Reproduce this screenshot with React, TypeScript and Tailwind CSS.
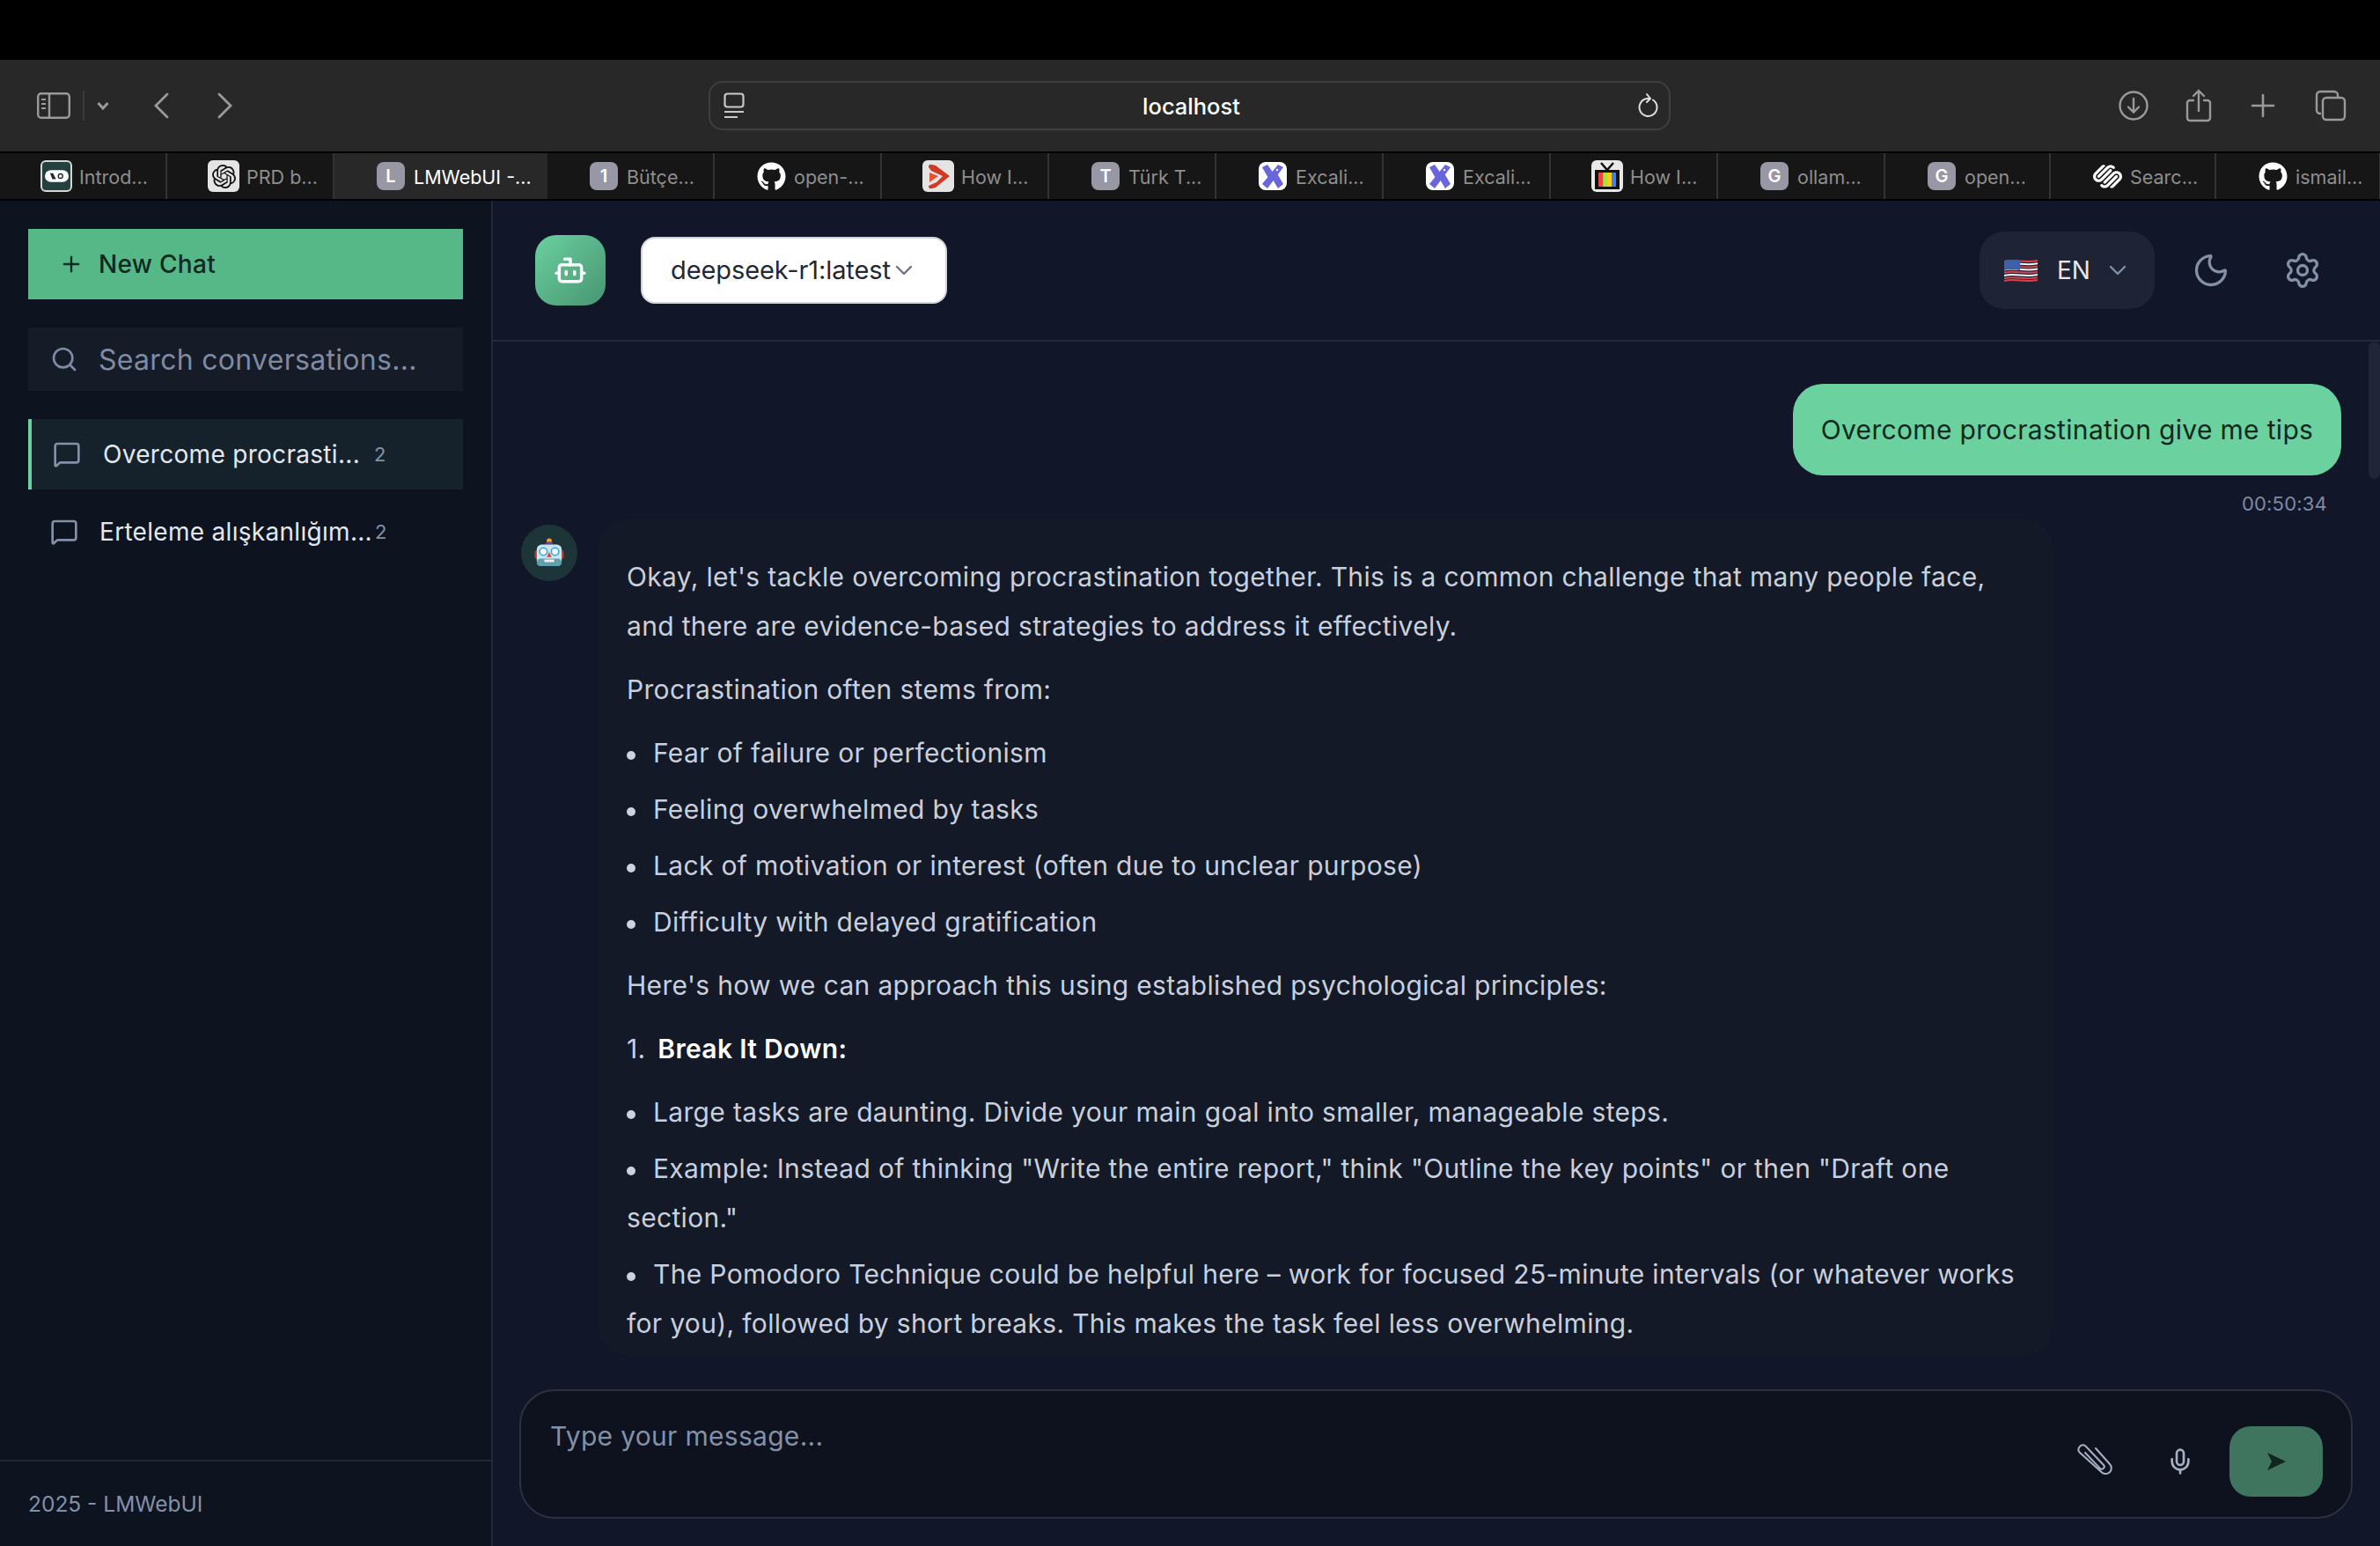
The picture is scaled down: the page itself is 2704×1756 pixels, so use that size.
import React from "react";
import { Plus, Search, MessageSquare, Bot, ChevronDown, Moon, Settings, Mic } from "lucide-react";
import { FaGithub } from "react-icons/fa";
import { SiOpenai, SiSquarespace } from "react-icons/si";

const Letter = ({ c }: { c: string }) => (
  <div className="w-[32px] h-[32px] rounded-[8px] bg-[#9797a5] flex items-center justify-center text-white text-[20px] font-semibold">{c}</div>
);
const IconBox = ({ children, bg }: { children: React.ReactNode; bg: string }) => (
  <div className={`w-[36px] h-[36px] rounded-[6px] flex items-center justify-center overflow-hidden ${bg}`}>{children}</div>
);
const Excal = () => (
  <div className="w-[32px] h-[32px] rounded-[8px] bg-white flex items-center justify-center">
    <svg viewBox="0 0 32 32" className="w-[32px] h-[32px]">
      <path d="M4 6 L10 3 L17 13 L12 20 Z" fill="#6965db" />
      <path d="M16 20 L21 13 L28 25 L22 30 Z" fill="#6965db" />
      <path d="M28 6 L22 3 L4 25 L10 30 Z" fill="#6965db" />
      <circle cx="21" cy="9" r="1.2" fill="#fff" />
    </svg>
  </div>
);
const Logo0 = () => (
  <div className="w-[36px] h-[36px] rounded-[6px] border-2 border-[#d5d5d5] bg-[#24403f] flex items-center justify-center">
    <svg viewBox="0 0 32 16" className="w-[27px] h-[14px]">
      <rect width="32" height="16" rx="8" fill="#fff" />
      <path d="M7 4 L11 4 L15 12 L10 12 Z" fill="#1d2b2b" />
      <circle cx="21" cy="8" r="3" fill="none" stroke="#1d2b2b" strokeWidth="1.6" />
    </svg>
  </div>
);
const Play = () => (
  <IconBox bg="bg-[#e4e4e4]">
    <svg viewBox="0 0 36 36" className="w-[36px] h-[36px]">
      <path d="M7 8 Q7 4 11 5 L15 6 L31 18 L15 31 L11 32 Q7 33 7 29 L16 25 L23 18 L10 12 Z" fill="#d33a26" />
      <path d="M8 14 L18 18 L8 25 Z" fill="#e8532f" />
    </svg>
  </IconBox>
);
const TV = () => (
  <IconBox bg="bg-[#e8e8e8]">
    <svg viewBox="0 0 36 36" className="w-[36px] h-[36px]">
      <path d="M11 3 L18 11 L25 3" fill="none" stroke="#111" strokeWidth="2.5" />
      <rect x="4" y="11" width="28" height="22" fill="#111" />
      <rect x="8" y="14" width="5" height="16" fill="#ef4444" />
      <rect x="13" y="14" width="5" height="16" fill="#a3e635" />
      <rect x="18" y="14" width="5" height="16" fill="#facc15" />
      <rect x="23" y="14" width="5" height="16" fill="#3b82f6" />
    </svg>
  </IconBox>
);

const tabs: { t: string; w: string; icon: React.ReactNode; active?: boolean }[] = [
  { t: "Introd...", w: "w-[190px]", icon: <Logo0 /> },
  { t: "PRD b...", w: "w-[190px]", icon: <IconBox bg="bg-[#e4e4e4]"><SiOpenai className="text-[#111] text-[27px]" /></IconBox> },
  { t: "LMWebUI -...", w: "w-[242px]", icon: <Letter c="L" />, active: true },
  { t: "Bütçe...", w: "w-[190px]", icon: <Letter c="1" /> },
  { t: "open-...", w: "w-[190px]", icon: <FaGithub className="text-white text-[33px]" /> },
  { t: "How I...", w: "w-[190px]", icon: <Play /> },
  { t: "Türk T...", w: "w-[190px]", icon: <Letter c="T" /> },
  { t: "Excali...", w: "w-[190px]", icon: <Excal /> },
  { t: "Excali...", w: "w-[190px]", icon: <Excal /> },
  { t: "How I...", w: "w-[190px]", icon: <TV /> },
  { t: "ollam...", w: "w-[190px]", icon: <Letter c="G" /> },
  { t: "open...", w: "w-[188px]", icon: <Letter c="G" /> },
  { t: "Searc...", w: "w-[188px]", icon: <SiSquarespace className="text-white text-[33px]" /> },
  { t: "ismail...", w: "w-[187px]", icon: <FaGithub className="text-white text-[33px]" /> },
];

const Tab = ({ t, w, icon, active }: { t: string; w: string; icon: React.ReactNode; active?: boolean }) => (
  <div className={`${w} shrink-0 h-full flex items-center pl-[46px] border-r-2 ${active ? "bg-[#282828] text-white border-transparent" : "text-[#8e8e8e] border-[#333333]"}`}>
    <div className="w-[36px] flex justify-center shrink-0">{icon}</div>
    <span className="ml-[8px] text-[21.5px] leading-[26px] pt-[1px] whitespace-nowrap">{t}</span>
  </div>
);

const Toolbar = () => (
  <div className="h-[104px] bg-[#282828] flex items-center text-[#9a9a9a]">
    <div className="w-[805px] shrink-0 flex items-center pl-[42px]">
      <svg viewBox="0 0 38 30" className="w-[38px] h-[30px]" fill="none" stroke="currentColor" strokeWidth="2.4">
        <rect x="1.2" y="1.2" width="35.6" height="27.6" rx="3.5" />
        <path d="M14 1.2 V28.8" />
        <path d="M5 8 H10 M5 13 H10 M5 18 H10" strokeWidth="2" />
      </svg>
      <div className="w-[2px] h-[34px] bg-[#3a3a3a] ml-[14px]" />
      <svg viewBox="0 0 14 10" className="w-[14px] h-[10px] ml-[14px]" fill="none" stroke="currentColor" strokeWidth="3">
        <path d="M1.5 2 L7 8 L12.5 2" />
      </svg>
      <svg viewBox="0 0 18 30" className="w-[18px] h-[30px] ml-[50px]" fill="none" stroke="currentColor" strokeWidth="2.8" strokeLinecap="round">
        <path d="M16 2 L3 15 L16 28" />
      </svg>
      <svg viewBox="0 0 18 30" className="w-[18px] h-[30px] ml-[55px]" fill="none" stroke="currentColor" strokeWidth="2.8" strokeLinecap="round">
        <path d="M2 2 L15 15 L2 28" />
      </svg>
    </div>
    <div className="w-[1093px] h-[56px] shrink-0 rounded-[16px] border-2 border-[#3f3f3f] flex items-center pl-[15px] pr-[11px]">
      <svg viewBox="0 0 24 30" className="w-[24px] h-[30px] shrink-0" fill="none" stroke="#c9c9c9" strokeWidth="2.2">
        <rect x="1.5" y="1.5" width="21" height="15" rx="3" />
        <path d="M1 22 H23 M1 28 H16" />
      </svg>
      <div className="flex-1 text-center text-white text-[25.5px] leading-none font-medium pt-[2px]">localhost</div>
      <svg viewBox="0 0 24 30" className="w-[24px] h-[30px] shrink-0" fill="none" stroke="#e0e0e0" strokeWidth="2" strokeLinecap="round">
        <path d="M17 8.5 A10 10 0 1 1 10 7 H13" />
        <path d="M10 2 L14 7 L10 11" />
      </svg>
    </div>
    <div className="flex-1 flex items-center pl-[509px]">
      <svg viewBox="0 0 34 34" className="w-[34px] h-[34px] shrink-0" fill="none" stroke="currentColor" strokeWidth="2.4" strokeLinecap="round">
        <circle cx="17" cy="17" r="15.5" />
        <path d="M17 9 V24 M11 18.5 L17 24.5 L23 18.5" />
      </svg>
      <svg viewBox="0 0 30 38" className="w-[30px] h-[38px] ml-[42px] shrink-0" fill="none" stroke="currentColor" strokeWidth="2.4" strokeLinecap="round">
        <path d="M9 13 H5 a3 3 0 0 0 -3 3 V33 a3 3 0 0 0 3 3 H25 a3 3 0 0 0 3 -3 V16 a3 3 0 0 0 -3 -3 H21" />
        <path d="M15 25 V2 M9 8 L15 2 L21 8" />
      </svg>
      <svg viewBox="0 0 28 28" className="w-[28px] h-[28px] ml-[44px] shrink-0" fill="none" stroke="currentColor" strokeWidth="2.6" strokeLinecap="round">
        <path d="M14 2 V26 M2 14 H26" />
      </svg>
      <svg viewBox="0 0 36 36" className="w-[36px] h-[36px] ml-[45px] shrink-0" fill="none" stroke="currentColor" strokeWidth="2.4">
        <path d="M7 27 H6 a4 4 0 0 1 -4 -4 V6 a4 4 0 0 1 4 -4 H22 a4 4 0 0 1 4 4 V8" />
        <rect x="9" y="9" width="25" height="25" rx="4" />
      </svg>
    </div>
  </div>
);

const ChatItem = ({ t, active }: { t: string; active?: boolean }) => (
  <div className={`h-[80px] flex items-center text-[28px] tracking-[0.3px] ${active ? "bg-[#16222b] border-l-4 border-[#6bd09f] pl-[24px]" : "pl-[25px]"} text-[#e2e8f0]`}>
    <MessageSquare className="w-[32px] h-[32px] text-[#8390a8] shrink-0" strokeWidth={2} />
    <span className={`whitespace-nowrap ${active ? "ml-[25px] w-[308px]" : "ml-[24px] w-[313px]"}`}>{t}</span>
    <span className="text-[22px] text-[#8390a8] tracking-normal">2</span>
  </div>
);

const Sidebar = () => (
  <aside className="w-[560px] shrink-0 bg-[#0d131f] border-r-2 border-[#232837] flex flex-col">
    <div className="flex-1 px-[32px] pt-[32px]">
      <div className="h-[80px] bg-[#56b886] flex items-center pl-[35px] text-[#0f2a20] text-[28px] font-medium tracking-[0.3px]">
        <Plus className="w-[28px] h-[28px] shrink-0" strokeWidth={2} />
        <span className="ml-[17px]">New Chat</span>
      </div>
      <div className="h-[72px] mt-[32px] bg-[#151b27] flex items-center pl-[25px] text-[#7f8aa3] text-[32px] tracking-[0.3px]">
        <Search className="w-[32px] h-[32px] shrink-0" strokeWidth={2} />
        <span className="ml-[23px] pt-[2px]">Search conversations...</span>
      </div>
      <div className="mt-[32px] flex flex-col gap-[8px]">
        <ChatItem t="Overcome procrasti..." active />
        <ChatItem t="Erteleme alışkanlığım..." />
      </div>
    </div>
    <div className="h-[98px] border-t-2 border-[#232837] pl-[32px] pt-[32px] text-[24.5px] leading-[32px] text-[#8390a8]">2025 - LMWebUI</div>
  </aside>
);

const Flag = () => (
  <svg viewBox="0 0 38 28" className="w-[38px] h-[28px] shrink-0">
    {[0, 1, 2, 3, 4, 5, 6].map((i) => (
      <path key={i} d={`M0 ${3 + i * 3.2} C12 ${0 + i * 3.2} 24 ${5 + i * 3.2} 38 ${2 + i * 3.2} V${4 + i * 3.2} C24 ${7 + i * 3.2} 12 ${2 + i * 3.2} 0 ${5 + i * 3.2} Z`} fill={i % 2 === 0 ? "#d9414b" : "#f4f4f4"} />
    ))}
    <path d="M0 25 C12 22 24 27 38 24 V26 C24 29 12 24 0 27 Z" fill="#d9414b" />
    <path d="M0 3 C6 1.5 12 1.5 18 3 V14 C12 12.5 6 12.5 0 14 Z" fill="#3f5fa8" />
  </svg>
);

const Header = () => (
  <header className="h-[160px] shrink-0 border-b-2 border-[#242a3b] flex items-center pl-[48px]">
    <div className="w-[80px] h-[80px] rounded-[24px] bg-gradient-to-br from-[#6bd09f] to-[#489672] flex items-center justify-center">
      <Bot className="w-[38px] h-[38px] text-white" strokeWidth={2.2} />
    </div>
    <div className="ml-[40px] w-[348px] h-[76px] rounded-[16px] bg-white border-2 border-[#d1d5db] flex items-center pl-[32px] text-[#1f2937] text-[29px] tracking-[-0.1px]">
      <span>deepseek-r1:latest</span>
      <ChevronDown className="w-[32px] h-[32px] -ml-[1px] text-[#6b7280]" strokeWidth={1.8} />
    </div>
    <div className="flex-1" />
    <div className="w-[199px] h-[88px] rounded-[28px] bg-[#1e2436] flex items-center pl-[28px] text-[#e5e7eb] text-[28px]">
      <Flag />
      <span className="ml-[22px]">EN</span>
      <ChevronDown className="w-[32px] h-[32px] ml-[15px] text-[#8390a8]" strokeWidth={1.8} />
    </div>
    <Moon className="w-[44px] h-[44px] ml-[42px] text-[#8390a8]" strokeWidth={1.8} />
    <Settings className="w-[44px] h-[44px] ml-[60px] mr-[66px] text-[#8390a8]" strokeWidth={1.8} />
  </header>
);

const RobotEmoji = () => (
  <svg viewBox="0 0 36 36" className="w-[34px] h-[34px]">
    <circle cx="18" cy="3.5" r="3" fill="#f5a524" />
    <path d="M13.5 8 a4.5 3.5 0 0 1 9 0 Z" fill="#6a3fa0" />
    <rect x="0.5" y="15" width="4" height="10" rx="2" fill="#b03a2e" />
    <rect x="31.5" y="15" width="4" height="10" rx="2" fill="#b03a2e" />
    <rect x="3" y="8" width="30" height="26" rx="6" fill="#c9e6ec" />
    <rect x="3" y="25" width="30" height="9" rx="4.5" fill="#5f9fae" />
    <circle cx="11" cy="16.5" r="4.5" fill="#f2fbfd" stroke="#3fa0d8" strokeWidth="1.6" />
    <circle cx="25" cy="16.5" r="4.5" fill="#f2fbfd" stroke="#3fa0d8" strokeWidth="1.6" />
    <path d="M18 17 L21 23 H15 Z" fill="#d9453a" />
    <rect x="12" y="26" width="12" height="3" rx="1" fill="#eeeeee" />
  </svg>
);

const Li = ({ children }: { children: React.ReactNode }) => (
  <p className="mb-[8px]">
    <span className="inline-block w-[10px] h-[10px] rounded-full bg-[#cbd2e0] mr-[20px] align-middle" />
    {children}
  </p>
);

const Messages = () => (
  <div className="flex-1 min-h-0 flex overflow-hidden">
    <div className="flex-1 min-w-0 pl-[32px] pr-[31px] pt-[48px] flex flex-col">
      <div className="flex justify-end">
        <div className="w-[623px] h-[104px] rounded-[34px] bg-[#6bd19f] text-[#10291f] text-[30px] tracking-[0.33px] flex items-center justify-center">
          Overcome procrastination give me tips
        </div>
      </div>
      <div className="text-right text-[22px] leading-[32px] text-[#7f8aa3] pr-[16px] mt-[16px] tracking-[0.2px]">00:50:34</div>
      <div className="flex items-start mt-[2px]">
        <div className="w-[64px] h-[64px] rounded-full bg-[#1d3539] flex items-center justify-center shrink-0 mt-[6px]">
          <RobotEmoji />
        </div>
        <div className="ml-[24px] w-[1653px] shrink-0 rounded-[32px] bg-[#131926] pl-[32px] pr-[32px] pt-[37px] text-[30px] leading-[56px] tracking-[0.33px] text-[#c8cfdd]">
          <p className="mb-[16px]">Okay, let's tackle overcoming procrastination together. This is a common challenge that many people face, and there are evidence-based strategies to address it effectively.</p>
          <p className="mb-[16px]">Procrastination often stems from:</p>
          <div className="mb-[16px]">
            <Li>Fear of failure or perfectionism</Li>
            <Li>Feeling overwhelmed by tasks</Li>
            <Li>Lack of motivation or interest (often due to unclear purpose)</Li>
            <Li>Difficulty with delayed gratification</Li>
          </div>
          <p className="mb-[16px]">Here's how we can approach this using established psychological principles:</p>
          <p className="mb-[16px]">1. <strong className="font-semibold text-white ml-[5px]">Break It Down:</strong></p>
          <Li>Large tasks are daunting. Divide your main goal into smaller, manageable steps.</Li>
          <Li>Example: Instead of thinking "Write the entire report," think "Outline the key points" or then "Draft one section."</Li>
          <Li>The Pomodoro Technique could be helpful here – work for focused 25-minute intervals (or whatever works for you), followed by short breaks. This makes the task feel less overwhelming.</Li>
        </div>
      </div>
    </div>
    <div className="w-[13px] shrink-0">
      <div className="h-[156px] rounded-full bg-[#1f2636]" />
    </div>
  </div>
);

const InputBar = () => (
  <div className="shrink-0 pl-[30px] pr-[31px] pt-[34px] pb-[31px]">
    <div className="h-[147px] rounded-[40px] border-2 border-[#2c3140] bg-[#0d121e] flex pl-[33px] pr-[32px] text-[30px] tracking-[0.3px] text-[#8390a8]">
      <div className="flex-1 pt-[27px] leading-[48px]">Type your message...</div>
      <div className="flex items-center pt-[16px]">
        <svg viewBox="0 0 42 42" className="w-[42px] h-[42px]" fill="none" stroke="#a7b0c2" strokeWidth="2" strokeLinecap="round">
          <path d="M22 6 L38 24 a6.5 6.5 0 0 1 -9.5 9 L3.5 10.5 a5 5 0 0 1 7 -7 L31 25 a2.8 2.8 0 0 1 -4.3 3.6 L10 11" />
        </svg>
        <Mic className="w-[32px] h-[32px] ml-[60px] text-[#a7b0c2]" strokeWidth={2} />
        <div className="w-[106px] h-[80px] ml-[40px] rounded-[24px] bg-[#3f745f] flex items-center justify-center">
          <svg viewBox="0 0 21 20" className="w-[21px] h-[20px]"><path d="M0 0 L21 10 L0 20 L5 10 Z" fill="#10261f" /></svg>
        </div>
      </div>
    </div>
  </div>
);

export default function App() {
  return (
    <div className="w-[2704px] h-screen overflow-hidden flex flex-col bg-black font-['Inter',sans-serif]">
      <div className="h-[68px] shrink-0 bg-black" />
      <Toolbar />
      <div className="h-[56px] shrink-0 bg-[#161616] border-y-2 border-black flex font-['Inter',sans-serif]">
        {tabs.map((x, i) => <Tab key={i} {...x} />)}
      </div>
      <div className="flex-1 min-h-0 flex">
        <Sidebar />
        <main className="flex-1 min-w-0 bg-[#111729] flex flex-col">
          <Header />
          <Messages />
          <InputBar />
        </main>
      </div>
    </div>
  );
}
